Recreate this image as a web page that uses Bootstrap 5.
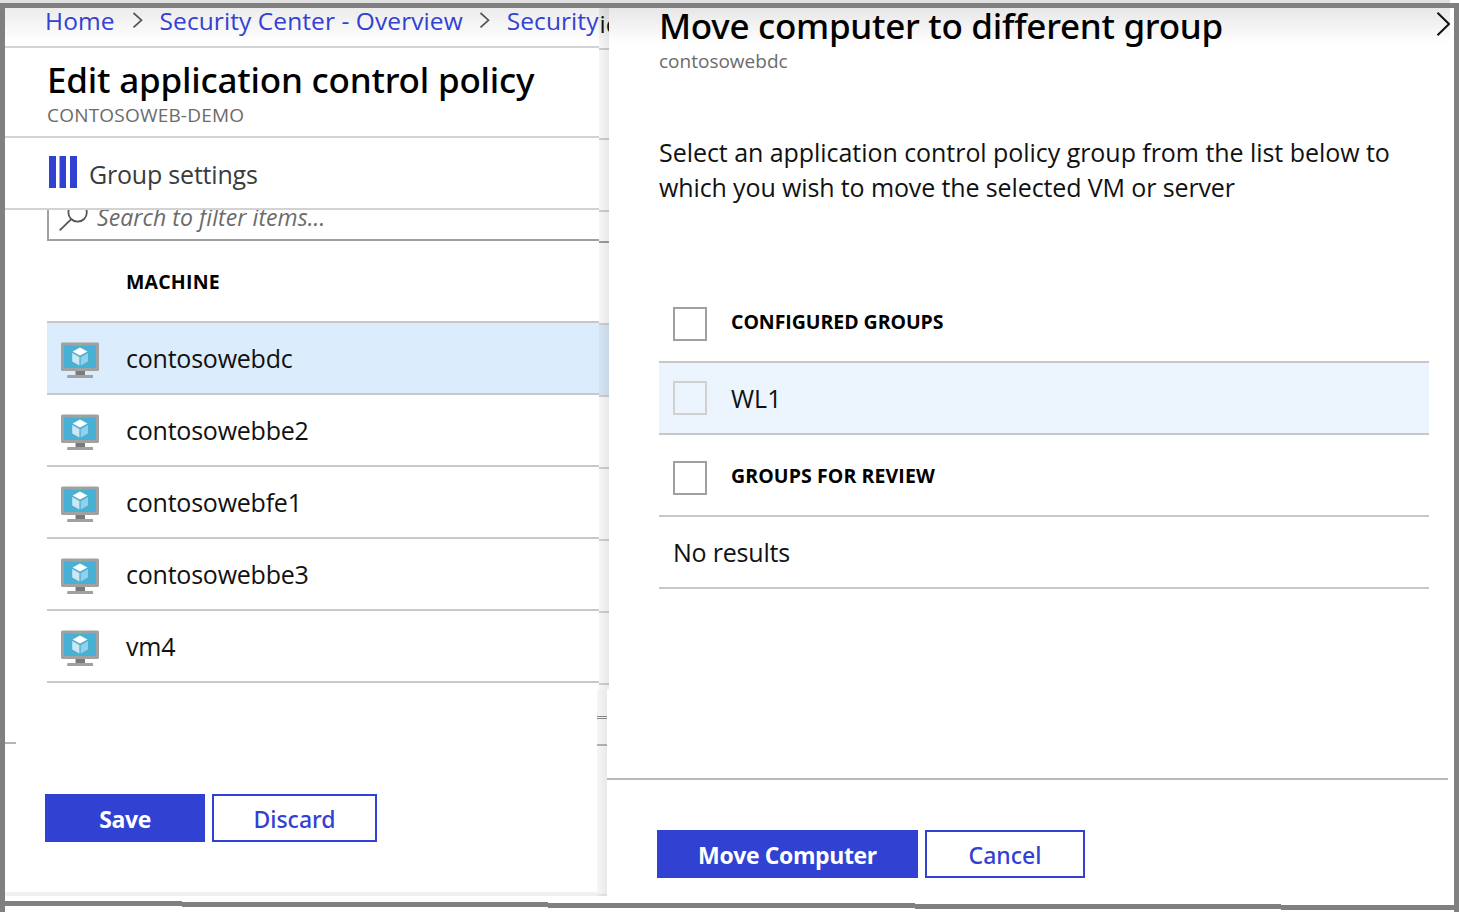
<!DOCTYPE html>
<html lang="en">
<head>
<meta charset="utf-8">
<title>Edit application control policy</title>
<link href="https://cdn.jsdelivr.net/npm/bootstrap@5.3.0/dist/css/bootstrap.min.css" rel="stylesheet">
<style>
body{font-family:"Open Sans","Noto Sans",sans-serif;color:#111;background:#fff;font-size:25px;width:1459px;height:912px;overflow:hidden}
.topstrip{height:3px;width:1450px;background:#e0e0e0}
.topbar{height:5px;background:#808080}
.window{height:909px;border-left:5px solid #808080;border-right:5px solid #808080;margin-top:-5px;padding-top:5px}
.upper{height:681px}
.lower{height:207px}
.policy{width:594px}
.fade-top{background:linear-gradient(#e7e7e7,#fff 90%)}
.policy .fade-top{background:linear-gradient(#ececec,#fff 90%)}
.crumbs{height:40px;border-bottom:2px solid #d3d3d3;padding-left:40px;line-height:25px;font-size:24.5px}
.crumbs a{color:#3142d2;text-decoration:none;letter-spacing:.08px}
.policy-head{height:90px;border-bottom:2px solid #d3d3d3;padding:9px 0 0 42px}
h1{font-family:"Noto Sans","Open Sans",sans-serif;font-weight:500;color:#000;margin:0;white-space:nowrap;font-size:35px;letter-spacing:-.2px}
.policy-head h1{line-height:46px;margin-bottom:1px}
.subhead{font-size:19px;line-height:22px;color:#6b6b6b}
.policy-head .subhead{letter-spacing:.2px}
.tools{height:72px;border-bottom:2px solid #d3d3d3;padding-left:44px;color:#3b3b3b;letter-spacing:-.2px}
.searchbox{height:31px;margin-left:42px;border-left:2px solid #a0a0a0;border-bottom:2px solid #a0a0a0;overflow:hidden;color:#6b6b6b;font-style:italic;font-size:23px;line-height:15px;letter-spacing:.08px}
.th-text{font-size:19.5px;font-weight:700;color:#000;letter-spacing:.1px}
.machine-th{height:80px;margin-left:42px;padding:2px 0 0 79px;letter-spacing:.2px}
.machines{margin-left:42px;border-top:2px solid #c8c8c8}
.machines li{height:72px;border-bottom:2px solid #c8c8c8;padding-left:13px;letter-spacing:-.23px}
.machines .sel,.edge .blue{background:#dbecfd}
.machines svg{margin-right:26px}
.machines span,.grow span{padding-top:2px}
.edge{width:10px;position:relative}
.edge::after{content:"";position:absolute;inset:0;background:linear-gradient(90deg,rgba(0,0,0,.035),rgba(0,0,0,.085))}
.edge div{border-bottom:2px solid #d3d3d3;overflow:hidden;white-space:nowrap}
.edge .e-crumb{height:42px;line-height:31px;padding-left:.5px;font-size:24.5px}
.edge .e-head{height:90px}
.edge .e-row{height:72px}
.edge .e-search{height:31px;border-color:#a0a0a0}
.edge .e-th{height:82px}
.edge .e-a{height:28px;border-bottom:1px solid #909090}
.edge .e-b{height:2px;border-bottom:1px solid #909090}
.edge .e-c{height:27px;border-color:#b8b8b8}
.edge .e-d{height:150px;border-color:#f0f0f0}
.mover{width:845px}
.mover-top{height:40px;padding-left:50px;width:841px}
.mover h1{line-height:36px;letter-spacing:-.28px}
.mover .subhead{padding-left:50px;margin-top:2px}
.intro{margin:63px 0 0 50px;line-height:35px;height:146px;white-space:nowrap;letter-spacing:-.05px}
.intro-end{letter-spacing:-.12px}
.groups{margin-left:50px;width:770px}
.grow{border-bottom:2px solid #c8c8c8;height:72px;padding-left:14px}
.grow.gh{height:82px}
.conf{letter-spacing:-.05px}
.none{letter-spacing:-.2px}
.box{width:34px;height:34px;border:2px solid #a0a0a0;margin-right:24px}
.gh .box{margin-top:6px}
.off .box{border-color:#d0d0d0}
.off{background:#ecf4fe}
.foot-left{width:592px;border-bottom:4px solid #f0f0f0;padding:105px 0 0 40px;position:relative}
.dash{position:absolute;left:0;top:53px;width:11px;height:2px;background:#b4b4b4}
.btn{--bs-btn-border-radius:0;--bs-btn-border-width:2px;--bs-btn-color:#3142d2;--bs-btn-border-color:#3142d2;--bs-btn-padding-x:0;--bs-btn-padding-y:0;--bs-btn-font-family:"Noto Sans","Open Sans",sans-serif;height:48px;font-size:23px;font-weight:500;line-height:46px;margin-right:7px}
.btn-fill{--bs-btn-color:#fff;--bs-btn-bg:#3142d2;--bs-btn-font-family:"Open Sans","Noto Sans",sans-serif;font-weight:700;letter-spacing:-.38px}
.w-save{width:160px}.w-discard{width:165px}.w-move{width:261px}.w-cancel{width:160px}
.mover-foot{width:841px;margin-top:89px;border-top:2px solid #b8b8b8;padding:50px 0 0 50px}
.torn{display:block;margin:5px 0 0 -5px}
</style>
</head>
<body>
<svg class="position-absolute" width="0" height="0"><defs><g id="vm">
 <rect x="1" y="4.500" width="38" height="28.500" rx="1.500" fill="#a0a1a2"/>
 <path d="M4 7.500h32v22.500H4z" fill="#48afd5"/>
 <path d="M15.500 33h9.500v4h-9.500z" fill="#7a7a7a"/><path d="M7.500 37h25.500v3H7z" fill="#a0a1a2"/>
 <path d="M20 9.500L27.500 13.600 20 17.600 12.600 13.600z" fill="#fff"/>
 <path d="M12.200 15L19.400 19V27.500L12.200 23.400z" fill="#cbe7f3"/>
 <path d="M28 15L20.700 19V27.500L28 23.400z" fill="#93cfe6"/>
 <circle cx="20" cy="6" r=".8" fill="#a6c936"/>
</g></defs></svg>
<div class="topstrip"></div><div class="topbar"></div>
<div class="window">
 <div class="upper d-flex">
  <section class="policy">
   <nav class="crumbs fade-top d-flex text-nowrap"><a href="#">Home</a><svg width="45" height="25"><path d="M18.500 5l8 7.200-8 7.200" fill="none" stroke="#555" stroke-width="1.700"/></svg><a href="#">Security Center - Overview</a><svg width="44" height="25"><path d="M17.500 5l8 7.200-8 7.200" fill="none" stroke="#555" stroke-width="1.700"/></svg><a href="#">Security</a></nav>
   <header class="policy-head"><h1>Edit application control policy</h1><div class="subhead">CONTOSOWEB-DEMO</div></header>
   <div class="tools d-flex"><svg width="40" height="70"><path d="M0 18h7v32H0zM10.500 18h6.500v32h-6.500zM21 18h7v32h-7z" fill="#3142d2"/></svg><span class="align-self-center pt-1">Group settings</span></div>
   <div class="searchbox d-flex"><svg width="48" height="29"><path d="M10.700 20.300L22 9.300" stroke="#555" stroke-width="1.800"/><circle cx="28.600" cy="2.500" r="9.200" fill="none" stroke="#555" stroke-width="1.800"/></svg><span>Search to filter items...</span></div>
   <div class="machine-th th-text d-flex align-items-center">MACHINE</div>
   <ul class="machines list-unstyled mb-0">
    <li class="sel d-flex align-items-center"><svg width="40" height="40"><use href="#vm"/></svg><span>contosowebdc</span></li>
    <li class="d-flex align-items-center"><svg width="40" height="40"><use href="#vm"/></svg><span>contosowebbe2</span></li>
    <li class="d-flex align-items-center"><svg width="40" height="40"><use href="#vm"/></svg><span>contosowebfe1</span></li>
    <li class="d-flex align-items-center"><svg width="40" height="40"><use href="#vm"/></svg><span>contosowebbe3</span></li>
    <li class="d-flex align-items-center"><svg width="40" height="40"><use href="#vm"/></svg><span>vm4</span></li>
   </ul>
  </section>
  <div class="edge">
   <div class="e-crumb fade-top">ic</div><div class="e-head"></div><div class="e-row"></div><div class="e-search"></div><div class="e-th"></div>
   <div class="e-row blue"></div><div class="e-row"></div><div class="e-row"></div><div class="e-row"></div><div class="e-row"></div>
  </div>
  <section class="mover">
   <div class="mover-top fade-top d-flex justify-content-between"><h1>Move computer to different group</h1><svg width="14" height="34"><path d="M1.500 4.700L13 16 1.500 27.300" fill="none" stroke="#111" stroke-width="2"/></svg></div>
   <div class="subhead">contosowebdc</div>
   <p class="intro">Select an application control policy group from the list below to<br><span class="intro-end">which you wish to move the selected VM or server</span></p>
   <div class="groups">
    <div class="grow gh th-text d-flex align-items-center"><i class="box"></i><span class="conf">CONFIGURED GROUPS</span></div>
    <div class="grow off d-flex align-items-center"><i class="box"></i><span>WL1</span></div>
    <div class="grow gh th-text d-flex align-items-center"><i class="box"></i><span>GROUPS FOR REVIEW</span></div>
    <div class="grow none d-flex align-items-center"><span>No results</span></div>
   </div>
  </section>
 </div>
 <div class="lower d-flex">
  <footer class="foot-left d-flex"><i class="dash"></i><button class="btn btn-fill w-save">Save</button><button class="btn w-discard">Discard</button></footer>
  <div class="edge"><div class="e-a"></div><div class="e-b"></div><div class="e-c"></div><div class="e-d"></div></div>
  <footer class="mover-foot d-flex"><button class="btn btn-fill w-move">Move Computer</button><button class="btn w-cancel">Cancel</button></footer>
 </div>
 <svg class="torn" width="1454" height="11"><path d="M0 0H182V1H548V2H915V3H1281V4H1454V9H1281V8H915V7H548V6H182V5H0z" fill="#808080"/></svg>
</div>
<script src="https://cdn.jsdelivr.net/npm/bootstrap@5.3.0/dist/js/bootstrap.bundle.min.js"></script>
</body>
</html>
